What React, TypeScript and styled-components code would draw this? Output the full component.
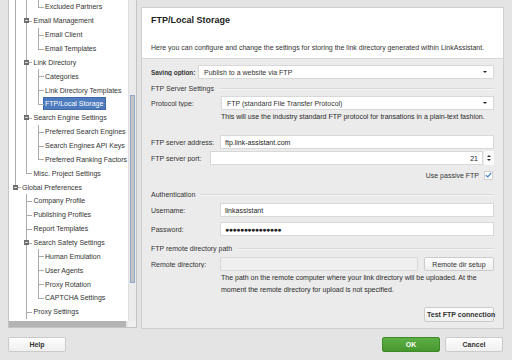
import styled, { createGlobalStyle } from 'styled-components';

const GlobalStyle = createGlobalStyle`
  html, body { margin: 0; padding: 0; }
  body {
    font-family: "Liberation Sans", Arial, sans-serif;
    font-size: 7px;
    color: #2e2e2e;
    background: #e4e4e4;
  }
  * { box-sizing: border-box; }
`;

type Node = [string, number];

const TREE: Node[] = [
  ['Excluded Partners', 2],
  ['Email Management', 1],
  ['Email Client', 2],
  ['Email Templates', 2],
  ['Link Directory', 1],
  ['Categories', 2],
  ['Link Directory Templates', 2],
  ['FTP/Local Storage', 2],
  ['Search Engine Settings', 1],
  ['Preferred Search Engines', 2],
  ['Search Engines API Keys', 2],
  ['Preferred Ranking Factors', 2],
  ['Misc. Project Settings', 1],
  ['Global Preferences', 0],
  ['Company Profile', 1],
  ['Publishing Profiles', 1],
  ['Report Templates', 1],
  ['Search Safety Settings', 1],
  ['Human Emulation', 2],
  ['User Agents', 2],
  ['Proxy Rotation', 2],
  ['CAPTCHA Settings', 2],
  ['Proxy Settings', 1],
  ['Scheduled Tasks', 1],
];
const VISIBLE = 23;
const SELECTED = 'FTP/Local Storage';

function hasNextAt(i: number, depth: number) {
  for (let j = i + 1; j < TREE.length; j++) {
    if (TREE[j][1] < depth) return false;
    if (TREE[j][1] === depth) return true;
  }
  return false;
}

const Page = styled.div`
  width: 512px;
  height: 360px;
  display: flex;
  flex-direction: column;
  overflow: hidden;
`;

const Main = styled.div`
  display: flex;
  gap: 4px;
  padding: 0 8px;
  height: 329px;
`;

const TreePanel = styled.div`
  width: 129px;
  height: 328px;
  border-left: 1px solid #c4c4c4;
  border-right: 1px solid #c4c4c4;
  border-bottom: 1px solid #c4c4c4;
  display: grid;
  grid-template-columns: 1fr 8px;
  grid-template-rows: 1fr 6px;
  background: #fff;
`;

const TreeBody = styled.div`
  overflow: hidden;
  position: relative;
`;

const TreeList = styled.div`
  margin-top: 0;
`;

const TreeRow = styled.div`
  display: flex;
  height: 13.86px;
  align-items: center;
`;

const Guide = styled.span<{ $v: 'none' | 'full' | 'top'; $h: boolean }>`
  position: relative;
  flex: 0 0 11.5px;
  align-self: stretch;

  &::before {
    content: '';
    position: absolute;
    left: 5.5px;
    top: 0;
    width: 1px;
    height: ${({ $v }) => ($v === 'full' ? '100%' : $v === 'top' ? '50%' : '0')};
    background: #ababab;
  }

  &::after {
    content: '';
    display: ${({ $h }) => ($h ? 'block' : 'none')};
    position: absolute;
    left: 5.5px;
    right: 0;
    top: 50%;
    height: 1px;
    background: #ababab;
  }
`;

const Toggle = styled.span`
  position: absolute;
  left: 3.5px;
  top: 50%;
  width: 5px;
  height: 5px;
  margin-top: -2.5px;
  background: #6e6e6e;
  z-index: 1;

  &::after {
    content: '';
    position: absolute;
    left: 1px;
    right: 1px;
    top: 2px;
    height: 1px;
    background: #d8d8d8;
  }
`;

const NodeLabel = styled.span<{ $selected: boolean }>`
  white-space: nowrap;
  padding: 0 2px 0 1.5px;
  height: 13px;
  display: flex;
  align-items: center;
  color: ${({ $selected }) => ($selected ? '#fff' : '#333')};
  background: ${({ $selected }) => ($selected ? '#4d7bbd' : 'transparent')};
  border: 1px solid ${({ $selected }) => ($selected ? '#3e69a8' : 'transparent')};
  margin-left: -1px;
`;

const VScroll = styled.div`
  background: #ececec;
  border-left: 1px solid #dedede;
  padding: 95px 0 0 0;
`;

const VThumb = styled.div`
  height: 188px;
  margin: 0 1px;
  background: #c4c3c1;
  border: 1px solid #8fa6cd;
`;

const HScroll = styled.div`
  background: #e6e6e6;
  padding: 0 2px 0 0;
`;

const HThumb = styled.div`
  height: 100%;
  background: #b3b3b3;
`;

const Corner = styled.div`
  background: #f0f0f0;
`;

const Panel = styled.section`
  flex: 1;
  margin-top: 7px;
  height: 322px;
  border: 1px solid #cecece;
  background: #ebebeb;
  display: flex;
  flex-direction: column;
`;

const Header = styled.header`
  background: #fff;
  height: 51px;
  border-bottom: 1px solid #d6d6d6;
  padding: 6px 9px 0;
`;

const Title = styled.h1`
  margin: 0;
  font-size: 9px;
  line-height: 12px;
  font-weight: bold;
  color: #222;
`;

const Intro = styled.p`
  margin: 17px 0 0;
  line-height: 10px;
  color: #333;
  white-space: nowrap;
`;

const Content = styled.div`
  display: flex;
  flex-direction: column;
  padding: 6px 9px 0;
`;

const Row = styled.div<{ $mt: number }>`
  display: flex;
  align-items: center;
  height: 14px;
  margin-top: ${({ $mt }) => $mt}px;
`;

const Label = styled.span<{ $w: number; $bold?: boolean }>`
  flex: 0 0 ${({ $w }) => $w}px;
  font-weight: ${({ $bold }) => ($bold ? 'bold' : 'normal')};
  font-size: ${({ $bold }) => ($bold ? '6.4px' : 'inherit')};
  color: #333;
  white-space: nowrap;
  overflow: hidden;
`;

const Select = styled.div`
  flex: 1;
  height: 14px;
  background: #fff;
  border: 1px solid #d8d8d8;
  display: flex;
  align-items: center;
  justify-content: space-between;
  padding: 0 6px 0 5px;
  color: #333;

  &::after {
    content: '';
    border-left: 2px solid transparent;
    border-right: 2px solid transparent;
    border-top: 2.5px solid #222;
  }
`;

const Input = styled.div<{ $disabled?: boolean; $align?: string }>`
  flex: 1;
  height: 14px;
  background: ${({ $disabled }) => ($disabled ? '#efefef' : '#fff')};
  border: 1px solid #d8d8d8;
  display: flex;
  align-items: center;
  justify-content: ${({ $align }) => ($align === 'right' ? 'flex-end' : 'flex-start')};
  padding: 0 4px;
  color: #222;
`;

const Dots = styled.span`
  font-size: 7px;
  letter-spacing: -0.5px;
`;

const Spinner = styled.div`
  flex: 0 0 10px;
  height: 14px;
  display: flex;
  flex-direction: column;
  justify-content: center;
  align-items: center;
  gap: 2px;
  margin-left: 1px;
  background: #fafafa;
`;

const Arrow = styled.span<{ $up?: boolean }>`
  border-left: 2px solid transparent;
  border-right: 2px solid transparent;
  ${({ $up }) => ($up ? 'border-bottom: 2.5px solid #333;' : 'border-top: 2.5px solid #333;')}
`;

const Section = styled.div<{ $mt: number }>`
  display: flex;
  align-items: center;
  gap: 5px;
  height: 10px;
  margin-top: ${({ $mt }) => $mt}px;
  color: #333;
  white-space: nowrap;

  &::after {
    content: '';
    flex: 1;
    height: 1px;
    background: #d9d9d9;
    box-shadow: 0 1px 0 #f6f6f6;
  }
`;

const Note = styled.p<{ $mt: number }>`
  margin: ${({ $mt }) => $mt}px 0 0 70px;
  line-height: 10px;
  color: #2a2a2a;
  white-space: nowrap;
`;

const Hint = styled.p<{ $mt: number }>`
  margin: ${({ $mt }) => $mt}px 0 0 70px;
  line-height: 12px;
  color: #2a2a2a;
  width: 266px;
`;

const CheckRow = styled.label`
  display: flex;
  justify-content: flex-end;
  align-items: center;
  gap: 5px;
  height: 10px;
  margin-top: 5px;
  padding-right: 1px;
  color: #333;
`;

const Check = styled.span`
  width: 9px;
  height: 9px;
  background: #fff;
  border: 1px solid #d0d0d0;
  display: flex;
  align-items: center;
  justify-content: center;
`;

const Button = styled.button<{ $bold?: boolean; $w?: number }>`
  font-family: inherit;
  font-size: 7px;
  font-weight: ${({ $bold }) => ($bold ? 'bold' : 'normal')};
  color: #333;
  height: 15px;
  width: ${({ $w }) => ($w ? `${$w}px` : 'auto')};
  padding: 0 2px;
  border: 1px solid #cbcbcb;
  border-radius: 2px;
  background: linear-gradient(#fdfdfd, #efefef);
  white-space: nowrap;
`;

const SideButton = styled(Button)`
  margin-left: 6px;
  height: 14px;
`;

const RightBar = styled.div`
  display: flex;
  justify-content: flex-end;
  margin-top: 11px;
`;

const Footer = styled.footer`
  display: flex;
  align-items: center;
  padding: 8px 9px 0 8px;
  gap: 5px;
`;

const Spacer = styled.div`
  flex: 1;
`;

const OkButton = styled(Button)`
  background: linear-gradient(#5cb043, #47972f);
  border-color: #3f8a2a;
  color: #fff;
`;

function Tree() {
  return (
    <TreePanel>
      <TreeBody>
        <TreeList>
          {TREE.slice(0, VISIBLE).map(([name, depth], i) => {
            const guides = [];
            for (let k = 0; k < depth; k++) {
              guides.push(<Guide key={k} $v={hasNextAt(i, k) ? 'full' : 'none'} $h={false} />);
            }
            const last = !hasNextAt(i, depth);
            const parent = i + 1 < TREE.length && TREE[i + 1][1] > depth;
            guides.push(
              <Guide key="own" $v={last ? 'top' : 'full'} $h>
                {parent && <Toggle />}
              </Guide>
            );
            return (
              <TreeRow key={name}>
                {guides}
                <NodeLabel $selected={name === SELECTED}>{name}</NodeLabel>
              </TreeRow>
            );
          })}
        </TreeList>
      </TreeBody>
      <VScroll>
        <VThumb />
      </VScroll>
      <HScroll>
        <HThumb />
      </HScroll>
      <Corner />
    </TreePanel>
  );
}

export default function App() {
  return (
    <Page>
      <GlobalStyle />
      <Main>
        <Tree />
        <Panel>
          <Header>
            <Title>FTP/Local Storage</Title>
            <Intro>
              Here you can configure and change the settings for storing the link directory generated within
              LinkAssistant.
            </Intro>
          </Header>
          <Content>
            <Row $mt={0}>
              <Label $w={47} $bold>Saving option:</Label>
              <Select>Publish to a website via FTP</Select>
            </Row>
            <Section $mt={4}>FTP Server Settings</Section>
            <Row $mt={3}>
              <Label $w={70}>Protocol type:</Label>
              <Select>FTP (standard File Transfer Protocol)</Select>
            </Row>
            <Note $mt={2}>This will use the industry standard FTP protocol for transations in a plain-text fashion.</Note>
            <Row $mt={13}>
              <Label $w={69}>FTP server address:</Label>
              <Input>ftp.link-assistant.com</Input>
            </Row>
            <Row $mt={2}>
              <Label $w={59}>FTP server port:</Label>
              <Input $align="right">21</Input>
              <Spinner>
                <Arrow $up />
                <Arrow />
              </Spinner>
            </Row>
            <CheckRow>
              Use passive FTP
              <Check>
                <svg width="7" height="6" viewBox="0 0 7 6">
                  <path d="M0.8 3.2 L2.8 5 L6.2 0.8" fill="none" stroke="#3b7fd8" strokeWidth="1.2" />
                </svg>
              </Check>
            </CheckRow>
            <Section $mt={9}>Authentication</Section>
            <Row $mt={4}>
              <Label $w={69}>Username:</Label>
              <Input>linkassistant</Input>
            </Row>
            <Row $mt={5}>
              <Label $w={69}>Password:</Label>
              <Input>
                <Dots>●●●●●●●●●●●●●●●</Dots>
              </Input>
            </Row>
            <Section $mt={7}>FTP remote directory path</Section>
            <Row $mt={4}>
              <Label $w={69}>Remote directory:</Label>
              <Input $disabled />
              <SideButton $w={70}>Remote dir setup</SideButton>
            </Row>
            <Hint $mt={1}>
              The path on the remote computer where your link directory will be uploaded. At the moment the remote
              directory for upload is not specified.
            </Hint>
            <RightBar>
              <Button $bold $w={70}>Test FTP connection</Button>
            </RightBar>
          </Content>
        </Panel>
      </Main>
      <Footer>
        <Button $bold $w={58}>Help</Button>
        <Spacer />
        <OkButton $bold $w={58}>OK</OkButton>
        <Button $bold $w={58}>Cancel</Button>
      </Footer>
    </Page>
  );
}
